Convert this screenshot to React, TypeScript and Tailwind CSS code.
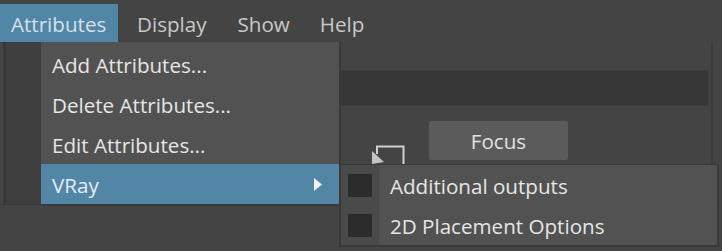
export default function App() {
  return (
    <div className="relative w-[722px] h-[251px] overflow-hidden bg-[#444444] font-['Open_Sans',sans-serif] text-[20.6px] leading-none">
      {/* Menubar */}
      <div className="flex h-[42px] pt-[4px] text-[#c9c9c9]">
        <div className="w-[118px] bg-[#5286a7] text-[#d5e0ea] flex items-center pl-[11px] pt-[2px]">Attributes</div>
        <div className="flex items-center pl-[19px] pt-[2px]">Display</div>
        <div className="flex items-center pl-[31px] pt-[2px]">Show</div>
        <div className="flex items-center pl-[30px] pt-[2px]">Help</div>
      </div>
      {/* Body */}
      <div className="flex h-[163px] border-b border-[#3a3a3a]">
        <div className="w-[41px] flex">
          <div className="w-[3px] bg-[#454545]" />
          <div className="w-[3px] bg-[#383838]" />
          <div className="flex-1 bg-[#3f3f3f]" />
        </div>
        <div className="w-[672px] border-r-2 border-[#3b3b3b] flex flex-col">
          <div className="mt-[28px] ml-[250px] mr-[2px] h-[36px] bg-[#373737] border border-[#3d3d3d]" />
          <div className="mt-[15px] flex items-start">
            <div className="ml-[331px] mt-[24px] w-[34px] h-[20px]">
              <svg width="34" height="20" viewBox="0 0 34 20">
                <path d="M5 9V1.5H31.5V20" fill="none" stroke="#cfcfcf" strokeWidth="2" />
                <path d="M0 6L0 19L12 17Z" fill="#c4c4c4" />
              </svg>
            </div>
            <div className="ml-[23px] w-[139px] h-[39px] bg-[#5b5b5b] rounded-[2px] flex items-center justify-center pt-[2px] text-[#e2e2e2]">
              Focus
            </div>
          </div>
        </div>
        <div className="flex-1" />
      </div>

      {/* Dropdown menu */}
      <div className="absolute left-[41px] top-[42px] w-[300px] pt-[2px] bg-[#525252] border-r-2 border-b-2 border-[#383838] text-[#e6e6e6]">
        <div className="h-[40px] flex items-center pl-[11px] pt-[2px]">Add Attributes...</div>
        <div className="h-[40px] flex items-center pl-[11px] pt-[2px]">Delete Attributes...</div>
        <div className="h-[40px] flex items-center pl-[11px] pt-[2px]">Edit Attributes...</div>
        <div className="h-[40px] flex items-center pl-[11px] pt-[2px] bg-[#5286a7] text-[#e4edf4] relative">
          VRay
          <svg className="absolute left-[273px] top-[14px]" width="8" height="13" viewBox="0 0 8 13">
            <path d="M0 0L8 6.5L0 13Z" fill="#f2f2f2" />
          </svg>
        </div>
      </div>

      {/* Submenu */}
      <div className="absolute left-[339px] top-[164px] w-[380px] h-[83px] bg-[#525252] border-2 border-t-[1px] border-[#393939] flex text-[#e6e6e6]">
        <div className="w-[38px] bg-[#4a4a4a] flex flex-col">
          <div className="h-[40px] flex items-center pl-[7px]">
            <div className="w-[24px] h-[23px] bg-[#2c2c2c]" />
          </div>
          <div className="h-[40px] flex items-center pl-[7px]">
            <div className="w-[24px] h-[23px] bg-[#2c2c2c]" />
          </div>
        </div>
        <div className="flex-1 flex flex-col">
          <div className="h-[40px] flex items-center pl-[11px] pt-[2px]">Additional outputs</div>
          <div className="h-[40px] flex items-center pl-[11px] pt-[2px]">2D Placement Options</div>
        </div>
      </div>
    </div>
  );
}
